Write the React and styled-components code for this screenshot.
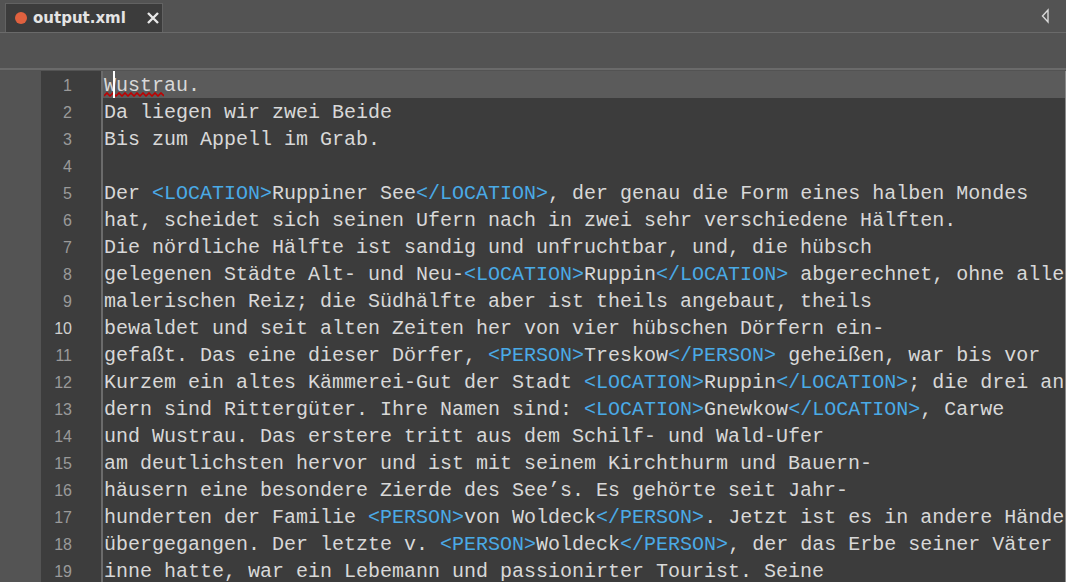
import React from 'react'
import styled, { createGlobalStyle } from 'styled-components'

const Global = createGlobalStyle`
  html, body { margin: 0; padding: 0; background: #535353; overflow: hidden; }
`

const Window = styled.div`
  width: 1066px;
  height: 582px;
  display: flex;
  flex-direction: column;
  background: #535353;
  font-family: "DejaVu Sans", Verdana, sans-serif;
`

const TabBar = styled.div`
  height: 32px;
  display: flex;
  align-items: flex-end;
  padding-left: 5px;
  border-bottom: 1px solid #6a6a6a;
  position: relative;
`

const Tab = styled.div`
  height: 29px;
  width: 158px;
  box-sizing: border-box;
  background: #3c3c3c;
  border: 1px solid #626262;
  border-bottom: none;
  display: flex;
  align-items: center;
  padding-left: 9px;
  gap: 6px;
  color: #e4e4e4;
  font-weight: bold;
  font-size: 15px;
`

const Dot = styled.span`
  width: 12px;
  height: 12px;
  border-radius: 50%;
  background: #e0613f;
`

const Close = styled.span`
  margin-left: 14px;
  display: flex;
`

const TabMenu = styled.div`
  position: absolute;
  right: 16px;
  top: 8px;
  display: flex;
`

const Toolbar = styled.div`
  height: 35px;
  border-bottom: 2px solid #6a6a6a;
`

const Editor = styled.div`
  flex: 1;
  display: flex;
  overflow: hidden;
  padding-top: 1px;
`

const Margin = styled.div`
  width: 41px;
  background: #545454;
`

const Gutter = styled.div`
  width: 60px;
  background: #3d3d3d;
  border-right: 2px solid #6b6b6b;
  padding-top: 1px;
`

const LineNo = styled.div`
  height: 27px;
  line-height: 27px;
  text-align: right;
  padding-right: 29px;
  font-family: "Liberation Sans", Arial, sans-serif;
  font-size: 16px;
  color: ${p => (p.$active ? '#cfcfcf' : '#9a9a9a')};
`

const Content = styled.div`
  flex: 1;
  background: #3c3c3c;
  border-right: 1px solid #8a8a8a;
  overflow: hidden;
`

const Row = styled.div`
  height: 27px;
  line-height: 29px;
  padding-left: 1px;
  white-space: pre;
  font-family: "Liberation Mono", "Courier New", monospace;
  font-size: 20px;
  color: #d8d8d8;
  background: ${p => (p.$current ? '#5b5b5b' : 'transparent')};
  position: relative;
`

const Tag = styled.span`
  color: #4aaae6;
`

const Squiggle = styled.svg`
  position: absolute;
  left: 1px;
  bottom: 1px;
`

const Caret = styled.span`
  position: absolute;
  left: 10px;
  top: 0;
  width: 2px;
  height: 27px;
  background: #ffffff;
`

const lines = [
  'Wustrau.',
  'Da liegen wir zwei Beide',
  'Bis zum Appell im Grab.',
  '',
  'Der <LOCATION>Ruppiner See</LOCATION>, der genau die Form eines halben Mondes',
  'hat, scheidet sich seinen Ufern nach in zwei sehr verschiedene Hälften.',
  'Die nördliche Hälfte ist sandig und unfruchtbar, und, die hübsch',
  'gelegenen Städte Alt- und Neu-<LOCATION>Ruppin</LOCATION> abgerechnet, ohne allen',
  'malerischen Reiz; die Südhälfte aber ist theils angebaut, theils',
  'bewaldet und seit alten Zeiten her von vier hübschen Dörfern ein-',
  'gefaßt. Das eine dieser Dörfer, <PERSON>Treskow</PERSON> geheißen, war bis vor',
  'Kurzem ein altes Kämmerei-Gut der Stadt <LOCATION>Ruppin</LOCATION>; die drei an-',
  'dern sind Rittergüter. Ihre Namen sind: <LOCATION>Gnewkow</LOCATION>, Carwe',
  'und Wustrau. Das erstere tritt aus dem Schilf- und Wald-Ufer',
  'am deutlichsten hervor und ist mit seinem Kirchthurm und Bauern-',
  'häusern eine besondere Zierde des See’s. Es gehörte seit Jahr-',
  'hunderten der Familie <PERSON>von Woldeck</PERSON>. Jetzt ist es in andere Hände',
  'übergegangen. Der letzte v. <PERSON>Woldeck</PERSON>, der das Erbe seiner Väter',
  'inne hatte, war ein Lebemann und passionirter Tourist. Seine',
]

const wave = Array.from({ length: 21 }, (_, i) => `${i * 3},${i % 2 ? 1 : 4}`).join(' ')

function renderLine(text) {
  const parts = text.split(/(<\/?[A-Z]+>)/)
  return parts.map((p, i) =>
    /^<\/?[A-Z]+>$/.test(p) ? <Tag key={i}>{p}</Tag> : <React.Fragment key={i}>{p}</React.Fragment>
  )
}

export default function App() {
  return (
    <Window>
      <Global />
      <TabBar>
        <Tab>
          <Dot />
          <span>output.xml</span>
          <Close>
            <svg width="14" height="14" viewBox="0 0 14 14">
              <path d="M2 2 L12 12 M12 2 L2 12" stroke="#e8e8e8" strokeWidth="2.4" />
            </svg>
          </Close>
        </Tab>
        <TabMenu>
          <svg width="10" height="16" viewBox="0 0 10 16">
            <path d="M8 2 L2.5 8 L8 14 Z" stroke="#d8d8d8" strokeWidth="1.4" fill="none" />
          </svg>
        </TabMenu>
      </TabBar>
      <Toolbar />
      <Editor>
        <Margin />
        <Gutter>
          {lines.map((_, i) => (
            <LineNo key={i} $active={i === 9}>{i + 1}</LineNo>
          ))}
        </Gutter>
        <Content>
          {lines.map((l, i) =>
            i === 0 ? (
              <Row key={i} $current>
                Wustrau.
                <Squiggle width="60" height="5" viewBox="0 0 60 5">
                  <polyline points={wave} stroke="#c00000" strokeWidth="1.6" fill="none" />
                </Squiggle>
                <Caret />
              </Row>
            ) : (
              <Row key={i}>{renderLine(l)}</Row>
            )
          )}
        </Content>
      </Editor>
    </Window>
  )
}
